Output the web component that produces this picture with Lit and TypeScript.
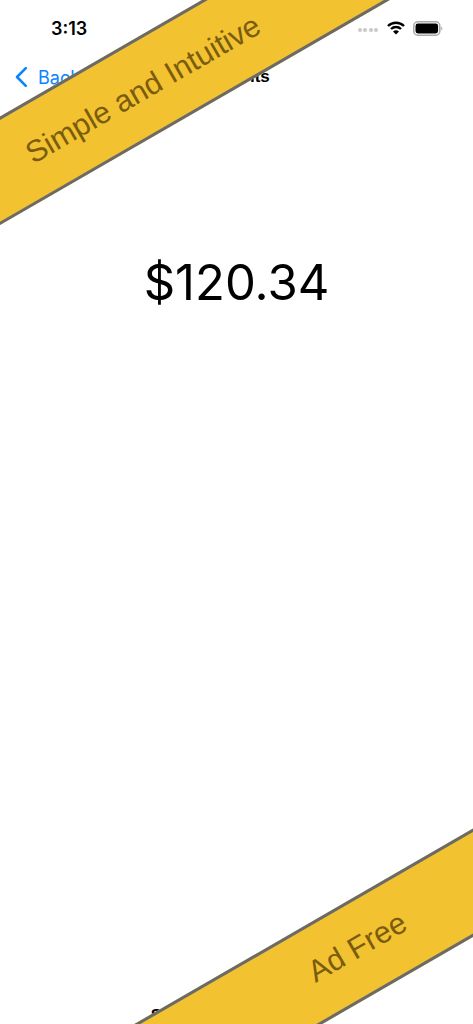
import { LitElement, html, css } from "lit";
import { customElement } from "lit/decorators.js";

@customElement("app-root")
export class AppRoot extends LitElement {
  static styles = css`
    :host {
      display: block;
      position: relative;
      width: 473px;
      height: 1024px;
      overflow: hidden;
      background: #fff;
      font-family: "Liberation Sans", Arial, sans-serif;
      color: #000;
    }
    .page {
      height: 100%;
      display: flex;
      flex-direction: column;
    }
    .status {
      height: 56px;
      flex: none;
      display: flex;
      align-items: center;
      padding: 0 30px 0 51px;
      box-sizing: border-box;
    }
    .time {
      font-family: Inter, "Liberation Sans", sans-serif;
      font-size: 18px;
      font-weight: 600;
    }
    .status-right {
      margin-left: auto;
      display: flex;
      align-items: center;
      gap: 8px;
    }
    .dots {
      display: flex;
      gap: 1.5px;
      margin-top: 4px;
      margin-right: 1px;
    }
    .dots i {
      width: 4px;
      height: 4px;
      border-radius: 50%;
      background: #c9c9c9;
    }
    .nav {
      height: 42px;
      flex: none;
      position: relative;
      display: flex;
      align-items: center;
      padding-left: 15px;
      gap: 5px;
    }
    .back {
      color: #0a84ff;
      font-size: 18px;
      font-family: Inter, "Liberation Sans", sans-serif;
    }
    .title {
      position: absolute;
      left: 0;
      right: 0;
      padding-right: 7px;
      text-align: center;
      font-size: 17px;
      font-weight: 700;
    }
    .amount {
      margin-top: 156px;
      text-align: center;
      font-size: 49px;
      line-height: 58px;
      font-family: Inter, "Liberation Sans", sans-serif;
      font-weight: 400;
    }
    .foot {
      margin-top: auto;
      text-align: center;
      font-size: 17px;
      font-weight: 700;
      padding-right: 132px;
      line-height: 17px;
    }
    .ribbon {
      position: absolute;
      left: -163.5px;
      width: 800px;
      height: 94px;
      box-sizing: border-box;
      display: flex;
      align-items: center;
      justify-content: center;
      background: #f2c230;
      border-top: 3px solid #6a6a6a;
      border-bottom: 3px solid #6a6a6a;
      transform: rotate(-30deg);
      color: #7a5c0e;
      font-size: 30.4px;
    }
    .r1 {
      top: -13.5px;
      padding-right: 218px;
      padding-top: 1px;
    }
    .r2 {
      top: 971.5px;
      padding-left: 280px;
      padding-bottom: 5px;
    }
  `;

  render() {
    return html`
      <div class="page">
        <div class="status">
          <span class="time">3:13</span>
          <div class="status-right">
            <div class="dots"><i></i><i></i><i></i><i></i></div>
            <svg width="18" height="14" viewBox="0 0 18 14">
              <path d="M1 5 A11.5 11.5 0 0 1 17 5" fill="none" stroke="#000" stroke-width="2.4"/>
              <path d="M4 8 A7.2 7.2 0 0 1 14 8" fill="none" stroke="#000" stroke-width="2.4"/>
              <path d="M9 13.5 L6 10.6 A4.3 4.3 0 0 1 12 10.6 Z" fill="#000"/>
            </svg>
            <svg width="30" height="15" viewBox="0 0 30 15">
              <rect x="0.8" y="0.8" width="26" height="13.4" rx="4" fill="none" stroke="#a8a8a8" stroke-width="1.5"/>
              <rect x="2.5" y="2.5" width="22.6" height="10" rx="2.4" fill="#000"/>
              <path d="M28.2 5.5 a2.4 2.4 0 0 1 0 4z" fill="#a8a8a8"/>
            </svg>
          </div>
        </div>
        <div class="nav">
          <svg width="18" height="22" viewBox="0 0 18 22">
            <path d="M10.8 2.2 L2 11 L10.8 19.8" fill="none" stroke="#0a84ff" stroke-width="2.6" stroke-linecap="round" stroke-linejoin="round"/>
          </svg>
          <span class="back">Back</span>
          <span class="title">Amounts</span>
        </div>
        <div class="amount">$120.34</div>
        <div class="foot">Save</div>
      </div>
      <div class="ribbon r1">Simple and Intuitive</div>
      <div class="ribbon r2">Ad Free</div>
    `;
  }
}
